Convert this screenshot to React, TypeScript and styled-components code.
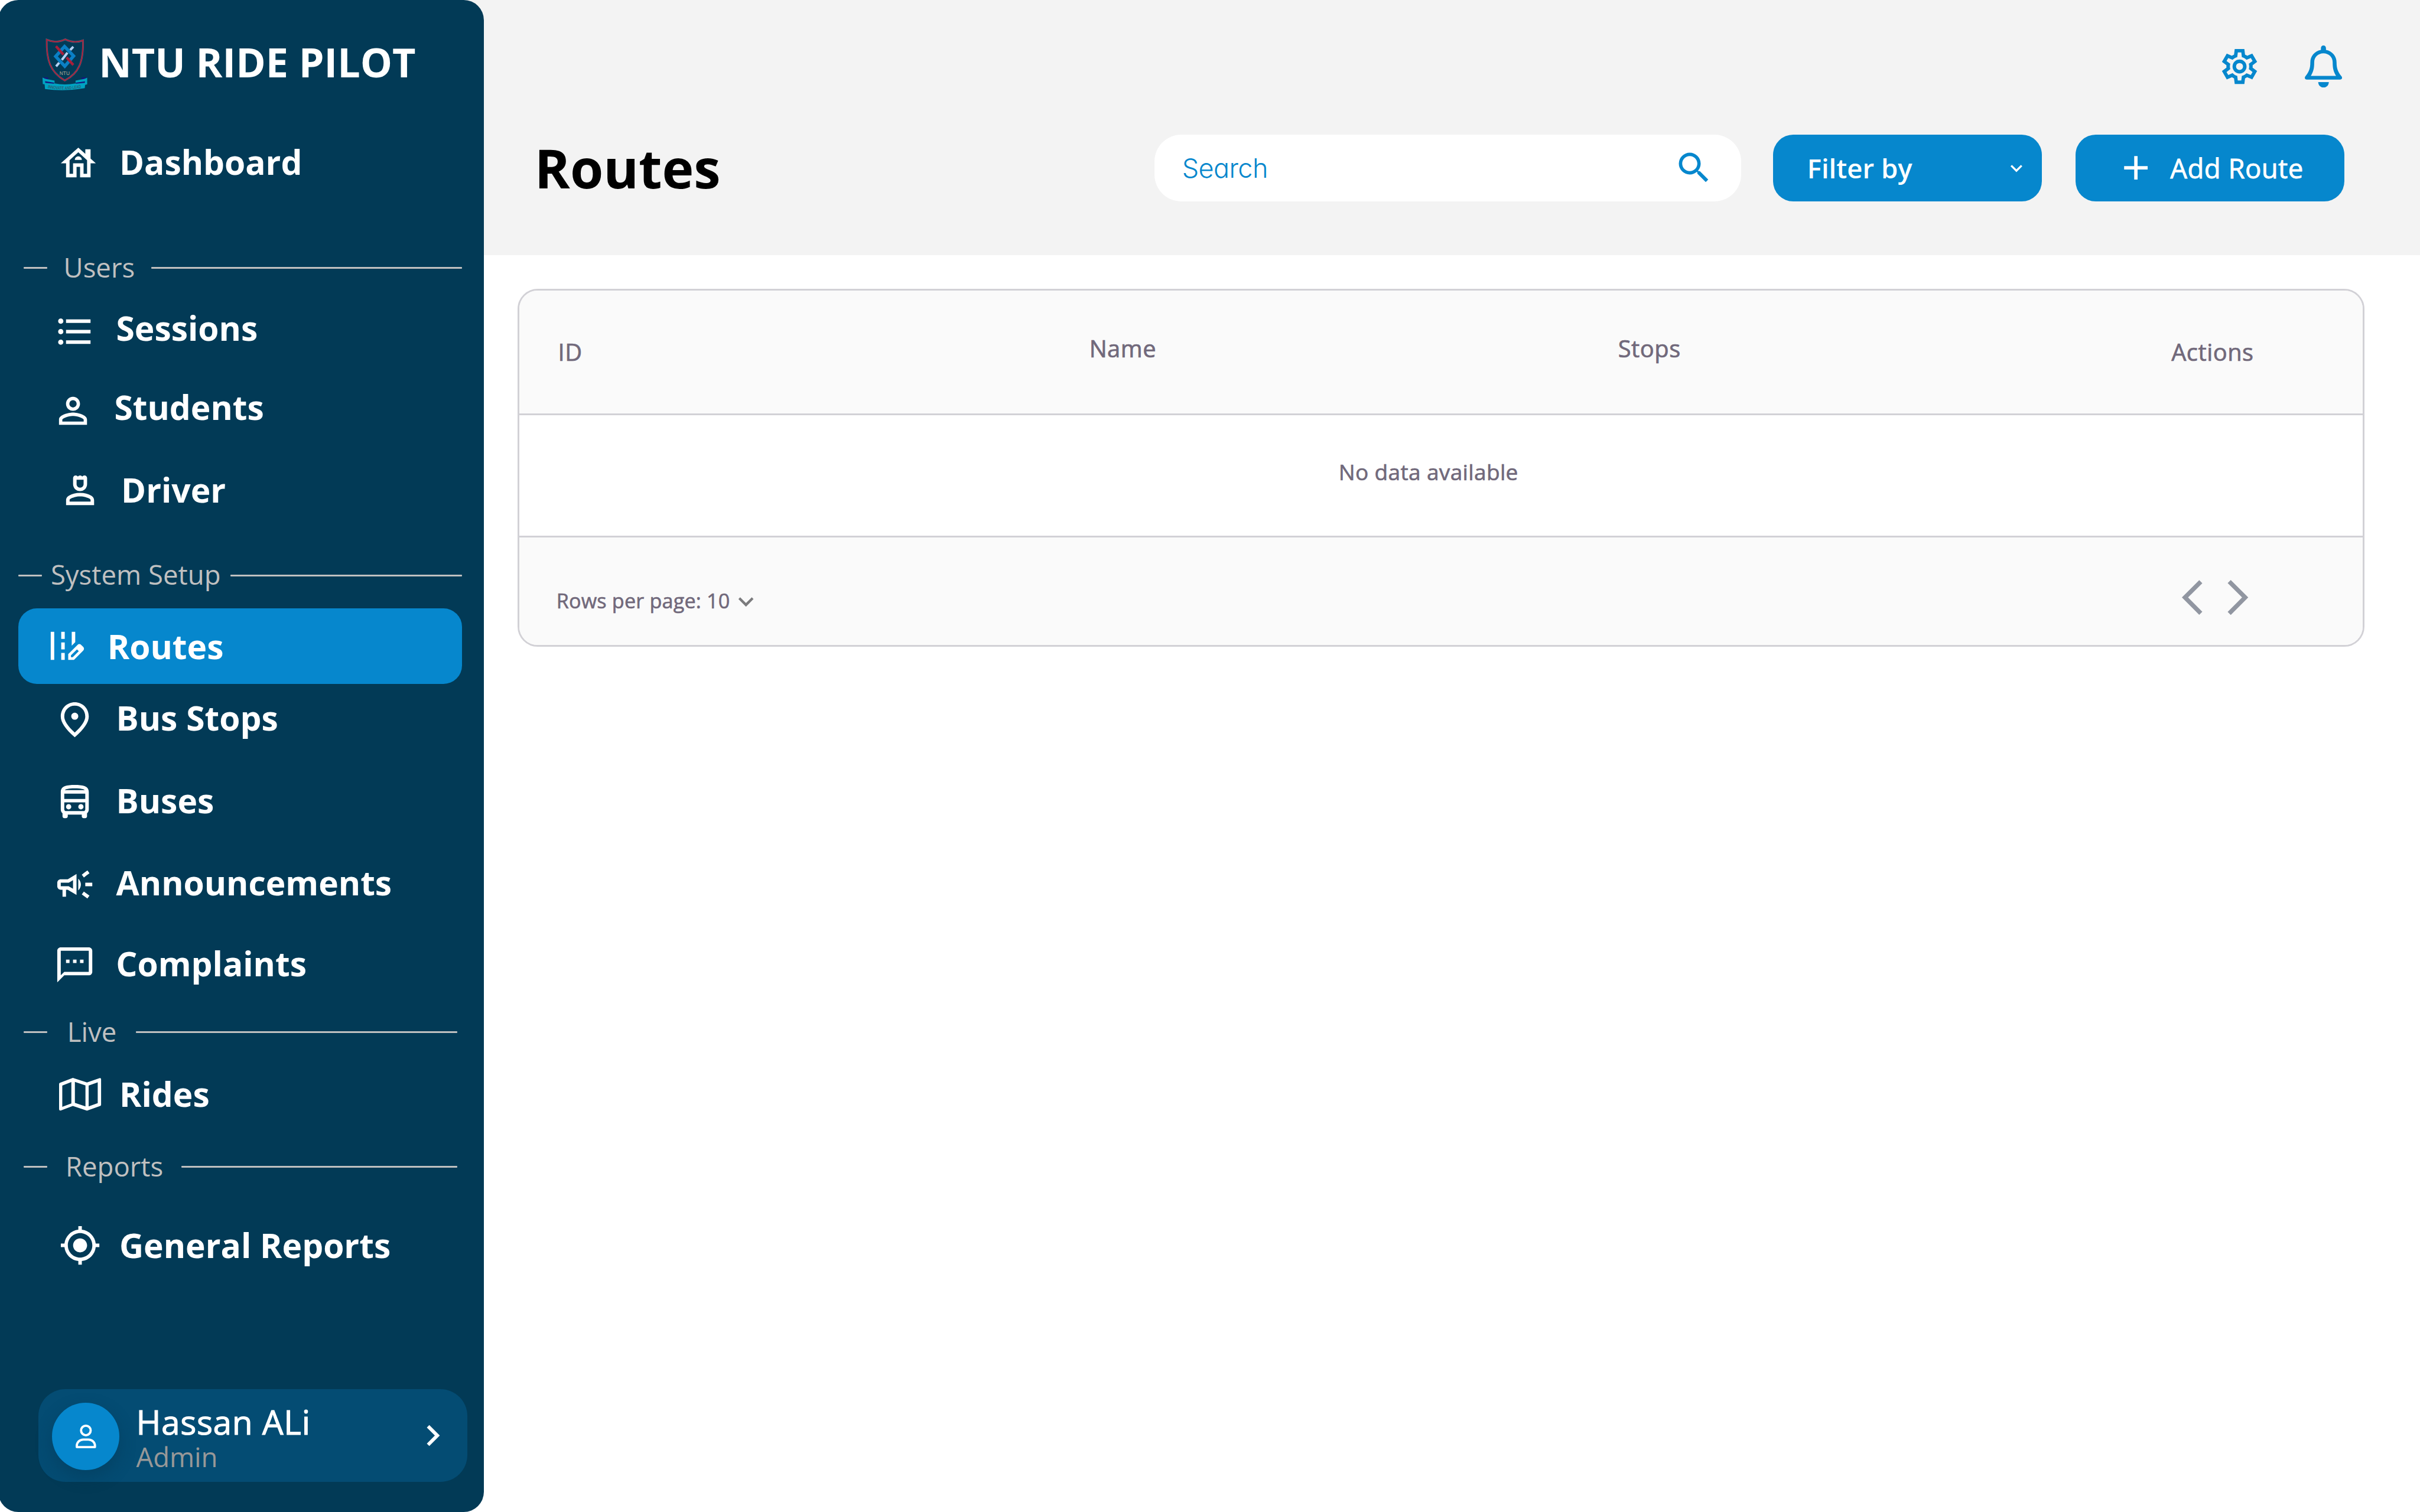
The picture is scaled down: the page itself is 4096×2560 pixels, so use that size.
import React from "react";
import styled, { createGlobalStyle, css } from "styled-components";
import {
  MdAdd,
  MdChevronRight,
  MdExpandMore,
  MdFormatListBulleted,
  MdMyLocation,
  MdOutlineCampaign,
  MdOutlineDirectionsBus,
  MdOutlineEditRoad,
  MdOutlineFmdGood,
  MdOutlineHouse,
  MdOutlinePerson4,
  MdOutlineTextsms,
  MdPersonOutline,
  MdSearch,
} from "react-icons/md";

/* The design grid is 1440 x 900; u() turns grid units into screen pixels. */
const u = (n: number) => `${((n * 4096) / 1440).toFixed(3)}px`;

const color = {
  navy: "#023a56",
  blue: "#0687cd",
  card: "#044c73",
  header: "#f3f3f3",
  rule: "#c0c0c0",
  border: "#d2d1d6",
  tableHead: "#fafafa",
  tableText: "#71697b",
  arrow: "#9196a1",
};

const Global = createGlobalStyle`
  *, *::before, *::after { box-sizing: border-box; }
  body {
    margin: 0;
    background: #fff;
    font-family: "Open Sans", "Noto Sans", sans-serif;
  }
  button, input { font: inherit; border: 0; margin: 0; padding: 0; background: none; color: inherit; }
  svg { display: block; flex: none; }
`;

/* Medium weight: the regular cut, slightly thickened and opened up. */
const medium = css<{ $track?: number }>`
  font-weight: 400;
  letter-spacing: ${(p) => p.$track ?? 0.013}em;
  -webkit-text-stroke: 0.018em currentColor;
`;

const Page = styled.div`
  display: flex;
  width: ${u(1440)};
  height: ${u(900)};
  overflow: hidden;
`;

/* ---------- Sidebar ---------- */

const Sidebar = styled.aside`
  z-index: 1;
  flex: none;
  display: flex;
  flex-direction: column;
  width: ${u(289)};
  height: 100%;
  margin-left: ${u(-1)};
  padding-left: ${u(1)};
  border-radius: ${u(12)};
  background: ${color.navy};
  color: #fff;
`;

const Brand = styled.div`
  display: flex;
  align-items: flex-start;
  height: ${u(76.1)};
  padding: ${u(22.5)} 0 0 ${u(25)};
`;

const BrandName = styled.div`
  margin-left: ${u(6.3)};
  font-size: ${u(24)};
  line-height: ${u(28.8)};
  font-weight: 700;
  white-space: nowrap;
`;

const NavItem = styled.a<{ $gap: number; $inset: number; $active?: boolean }>`
  display: flex;
  align-items: center;
  height: ${(p) => u(p.$active ? 45 : 40)};
  width: ${(p) => (p.$active ? u(264) : "auto")};
  margin-top: ${(p) => u(p.$gap)};
  margin-left: ${(p) => u(p.$active ? 11 : 0)};
  padding-left: ${(p) => u(p.$inset)};
  border-radius: ${u(11)};
  background: ${(p) => (p.$active ? color.blue : "transparent")};
`;

const NavIcon = styled.span<{ $drop: number }>`
  margin-top: ${(p) => u(p.$drop * 2)};
  font-size: ${u(25)};
`;

const NavLabel = styled.span<{ $gap: number }>`
  margin-left: ${(p) => u(p.$gap)};
  padding-top: ${u(0.8)};
  font-size: ${u(20)};
  line-height: ${u(28)};
  font-weight: 700;
  white-space: nowrap;
`;

const Section = styled.div<{ $gap: number; $left: number; $right: number; $label: number }>`
  display: grid;
  grid-template-columns: ${u(14)} ${(p) => u(p.$label)} 1fr;
  align-items: center;
  height: ${u(22)};
  margin-top: ${(p) => u(p.$gap)};
  padding-left: ${(p) => u(p.$left)};
  padding-right: ${(p) => u(p.$right)};
`;

const Rule = styled.span`
  height: 3px;
  border-radius: 1px;
  background: ${color.rule};
`;

const SectionLabel = styled.span<{ $inset: number }>`
  margin-bottom: ${u(0.9)};
  padding-left: ${(p) => u(p.$inset)};
  font-size: ${u(16)};
  line-height: ${u(20)};
  color: ${color.rule};
  white-space: nowrap;
`;

const Profile = styled.div`
  display: flex;
  align-items: center;
  width: ${u(255)};
  height: ${u(55)};
  margin: ${u(66)} 0 0 ${u(23)};
  padding: 0 ${u(8)};
  border-radius: ${u(16)};
  background: ${color.card};
`;

const Avatar = styled.div`
  display: flex;
  align-items: center;
  justify-content: center;
  width: ${u(40)};
  height: ${u(40)};
  margin-top: ${u(1)};
  border-radius: 50%;
  background: ${color.blue};
  box-shadow: 0 ${u(4)} ${u(10)} rgba(3, 48, 72, 0.32);
`;

const ProfileText = styled.div`
  flex: 1;
  margin-left: ${u(10)};
  padding-top: ${u(4.6)};
  white-space: nowrap;
`;

const ProfileName = styled.div`
  ${medium}
  font-size: ${u(20)};
  line-height: ${u(20.6)};
`;

const ProfileRole = styled.div`
  font-size: ${u(16)};
  line-height: ${u(20.6)};
  color: #989898;
`;

const ProfileChevron = styled.span`
  font-size: ${u(25)};
`;

/* ---------- Main ---------- */

const Main = styled.main`
  flex: 1;
  margin-left: ${u(-14)};
`;

const Header = styled.header`
  height: ${u(152)};
  padding: ${u(27)} ${u(45)} 0 ${u(44.1)};
  background: ${color.header};
`;

const HeaderIcons = styled.div`
  display: flex;
  justify-content: flex-end;
  gap: ${u(26.4)};
  height: ${u(25)};
  margin-right: ${u(1.4)};
  color: ${color.blue};
`;

const Toolbar = styled.div`
  display: flex;
  align-items: center;
  height: ${u(40)};
  margin-top: ${u(28)};
`;

const Title = styled.h1`
  flex: 1;
  margin: 0;
  padding-bottom: ${u(0.3)};
  font-size: ${u(32)};
  line-height: ${u(38)};
  font-weight: 700;
  color: #000;
`;

const SearchBox = styled.label`
  display: flex;
  align-items: center;
  width: ${u(349)};
  height: ${u(40)};
  padding: 0 ${u(16)} 0 ${u(16.4)};
  border-radius: ${u(16)};
  background: #fff;
  color: ${color.blue};
  font-size: ${u(24)};
`;

const SearchText = styled.span`
  flex: 1;
  padding-top: ${u(1)};
  font-family: Inter, Lato, sans-serif;
  font-size: ${u(15.8)};
  line-height: ${u(20)};
  font-weight: 300;
  letter-spacing: -0.013em;
  font-feature-settings: "cv11" 1;
`;

const ActionButton = styled.button<{ $gap: number; $left: number }>`
  display: flex;
  align-items: center;
  width: ${u(160)};
  height: ${u(40)};
  margin-left: ${(p) => u(p.$gap)};
  padding-left: ${(p) => u(p.$left)};
  border-radius: ${u(12)};
  background: ${color.blue};
  color: #fff;
`;

const FilterLabel = styled.span`
  width: ${u(117.6)};
  text-align: left;
  font-size: ${u(16)};
  line-height: ${u(22)};
  font-weight: 600;
`;

const AddLabel = styled.span`
  ${medium}
  margin-left: ${u(8.4)};
  font-size: ${u(16)};
  line-height: ${u(22)};
  white-space: nowrap;
`;

const ButtonIcon = styled.span<{ $size: number }>`
  font-size: ${(p) => u(p.$size)};
`;

/* ---------- Table ---------- */

const Table = styled.section`
  width: ${u(1099)};
  height: ${u(213)};
  margin: ${u(20)} 0 0 ${u(34)};
  border: 3px solid ${color.border};
  border-radius: ${u(12)};
  overflow: hidden;
  background: #fff;
  color: ${color.tableText};
  display: grid;
  grid-template-rows: ${u(74)} ${u(73)} 1fr;
`;

const HeadRow = styled.div`
  display: grid;
  grid-template-columns: ${u(339.1)} ${u(314.7)} ${u(329.2)} 1fr;
  align-items: center;
  border-bottom: 3px solid ${color.border};
  background: ${color.tableHead};
`;

const HeadCell = styled.div<{ $inset?: number; $lift?: number }>`
  ${medium}
  padding-top: ${u(0.6)};
  padding-left: ${(p) => u(p.$inset ?? 0)};
  padding-bottom: ${(p) => u((p.$lift ?? 0) * 2)};
  font-size: ${u(14)};
  line-height: ${u(20)};
`;

const EmptyRow = styled.div`
  ${medium}
  display: flex;
  align-items: center;
  justify-content: center;
  padding: 0 ${u(15)} ${u(4.3)} 0;
  border-bottom: 3px solid ${color.border};
  font-size: ${u(13)};
`;

const FootRow = styled.div`
  display: flex;
  align-items: center;
  justify-content: space-between;
  padding: 0 ${u(62)} 0 ${u(22)};
  background: ${color.tableHead};
`;

const RowsPerPage = styled.div`
  ${medium}
  display: flex;
  align-items: center;
  margin-top: ${u(11.2)};
  font-size: ${u(12)};
  line-height: ${u(18)};
`;

const RowsChevron = styled.span`
  margin: ${u(1.2)} 0 0 ${u(0.4)};
  font-size: ${u(18)};
  color: #7b7b7d;
`;

const Pager = styled.div`
  display: flex;
  margin-top: ${u(7.2)};
  color: ${color.arrow};
`;

const PagerIcon = styled.svg`
  width: ${u(25)};
  height: ${u(25)};
  fill: currentColor;
  & + & {
    margin-left: ${u(-4.4)};
  }
`;

/* ---------- Drawings ---------- */

const Sized = styled.svg<{ $w: number; $h: number }>`
  width: ${(p) => u(p.$w)};
  height: ${(p) => u(p.$h)};
  overflow: visible;
`;

const Crest = () => (
  <Sized $w={27.5} $h={31.7} viewBox="60 60 330 380">
    <g fill="none" strokeLinejoin="miter">
      <path d="M94 73Q160 103 226 71Q292 103 353 78C357 230 326 312 223 365C120 305 91 222 94 73Z" stroke="#8fa5b3" strokeOpacity=".55" strokeWidth="12" />
      <path d="M94 73Q160 103 226 71Q292 103 353 78C357 230 326 312 223 365C120 305 91 222 94 73Z" stroke="#a81f3b" strokeWidth="9" />
      <path d="M221 122L286 190L223 263L158 193Z" stroke="#0a80c6" strokeWidth="23" />
      <path d="M284 124L262 147M242 166L202 218M183 238L161 264" stroke="#b4d2f4" strokeWidth="17" />
      <path d="M160 120L214 180M236 200L284 254" stroke="#a81f3b" strokeWidth="18" />
    </g>
    <text x="186" y="325" fontFamily="Liberation Sans, Arial, sans-serif" fontSize="42" textLength="72" lengthAdjust="spacingAndGlyphs" fill="#b3ab94">
      NTU
    </text>
    <path d="M64 344L82 352L150 366V386Q222 400 300 386V366L366 352L383 345V392L368 396L366 420Q222 446 82 426L79 392L66 390Z" fill="#00a3c2" />
    <path d="M65 342H104V357L82 350ZM82 370L148 380L146 388L84 382ZM383 343H344V357L366 351ZM368 371L300 380L302 388L366 382Z" fill="#17157d" />
    <path id="motto" d="M101 418Q222 442 344 416" fill="none" />
    <text fontFamily="Liberation Sans, Arial, sans-serif" fontSize="32" fontWeight="700" fill="#2a6075">
      <textPath href="#motto" textLength="242" lengthAdjust="spacingAndGlyphs">
        INNOVATE AND LEAD
      </textPath>
    </text>
  </Sized>
);

const MapIcon = () => (
  <Sized $w={25} $h={19.5} viewBox="0 0 25 19.5" fill="currentColor">
    <path
      fillRule="evenodd"
      d="M.8 2.8L8.2 0L16.6 2.7L24 .15Q25-.1 25 .9V16Q25 16.5 24.5 16.7L16.6 19.5L8.2 16.7L1 19.4Q0 19.6 0 18.6V3.6Q0 3 .8 2.8ZM1.9 4.6V17.2L7.3 15.2V2.5ZM9.4 2.4V14.9L15.7 17V4.5ZM17.6 4.6V17L23 15V2.6Z"
    />
  </Sized>
);

const GearIcon = () => (
  <Sized $w={25} $h={25} viewBox="0 0 24 24" fill="currentColor">
    <path
      fillRule="evenodd"
      d="M9.25 22L8.85 18.8Q8.52 18.68 8.24 18.5Q7.95 18.33 7.68 18.13L4.7 19.38L1.95 14.63L4.53 12.68Q4.5 12.5 4.5 12.34V11.66Q4.5 11.5 4.53 11.33L1.95 9.38L4.7 4.63L7.68 5.88Q7.95 5.68 8.25 5.5Q8.55 5.33 8.85 5.2L9.25 2H14.75L15.15 5.2Q15.48 5.33 15.76 5.5Q16.05 5.68 16.33 5.88L19.3 4.63L22.05 9.38L19.48 11.33Q19.5 11.5 19.5 11.66V12.34Q19.5 12.5 19.45 12.68L22.03 14.63L19.28 19.38L16.33 18.13Q16.05 18.33 15.75 18.5Q15.45 18.68 15.15 18.8L14.75 22ZM11 20H12.98L13.33 17.35Q14.1 17.15 14.76 16.76Q15.43 16.38 15.98 15.83L18.45 16.85L19.43 15.15L17.28 13.53Q17.4 13.18 17.45 12.79Q17.5 12.4 17.5 12Q17.5 11.6 17.45 11.21Q17.4 10.83 17.28 10.48L19.43 8.85L18.45 7.15L15.98 8.2Q15.43 7.63 14.76 7.24Q14.1 6.85 13.33 6.65L13 4H11.03L10.68 6.65Q9.9 6.85 9.24 7.24Q8.58 7.63 8.03 8.18L5.55 7.15L4.58 8.85L6.73 10.45Q6.6 10.83 6.55 11.2Q6.5 11.58 6.5 12Q6.5 12.4 6.55 12.78Q6.6 13.15 6.73 13.53L4.58 15.15L5.55 16.85L8.03 15.8Q8.58 16.38 9.24 16.76Q9.9 17.15 10.68 17.35ZM12 8A4 4 0 1 0 12 16A4 4 0 1 0 12 8ZM12 10A2 2 0 1 1 12 14A2 2 0 1 1 12 10Z"
    />
  </Sized>
);

const BellIcon = () => (
  <Sized $w={22.2} $h={25} viewBox="0 0 22.2 25" fill="currentColor">
    <path
      fillRule="evenodd"
      d="M11.1 0C12 0 12.6.7 12.6 1.6V2.6C16.5 3.3 18.9 6.5 18.9 10C18.9 13.5 19.6 15.5 21.8 18.3C22.6 19.3 22 20.3 21 20.3H1.2C.2 20.3-.4 19.3.4 18.3C2.6 15.5 3.3 13.5 3.3 10C3.3 6.5 5.7 3.3 9.6 2.6V1.6C9.6.7 10.2 0 11.1 0ZM11.1 4.7C8 4.7 5.6 7 5.6 10C5.6 13.5 5.2 15.4 3.6 18.1H18.6C17 15.4 16.6 13.5 16.6 10C16.6 7 14.2 4.7 11.1 4.7Z"
    />
    <path d="M8 21.8H14.3C14.3 23.6 13 25 11.15 25S8 23.6 8 21.8Z" />
  </Sized>
);

const UserIcon = () => (
  <Sized $w={12.2} $h={14.1} viewBox="0 0 12.2 14.1" fill="none" stroke="currentColor" strokeWidth="1.35" strokeLinejoin="round">
    <circle cx="6.1" cy="3.5" r="2.85" />
    <path d="M4.6 8.9H7.6C9.8 8.9 11.5 10.5 11.5 12.7V13.4H.7V12.7C.7 10.5 2.4 8.9 4.6 8.9Z" />
  </Sized>
);

/* ---------- Content ---------- */

type Item = {
  label: string;
  icon: React.ReactNode;
  gap: number;
  inset: number;
  drop: number;
  labelGap: number;
  active?: boolean;
};
type Group = {
  title?: { text: string; gap: number; left: number; right: number; label: number; inset: number };
  items: Item[];
};

const groups: Group[] = [
  {
    items: [{ label: "Dashboard", icon: <MdOutlineHouse />, gap: 0, inset: 34.2, drop: 1.1, labelGap: 11.8 }],
  },
  {
    title: { text: "Users", gap: 32.4, left: 14, right: 13, label: 61.9, inset: 9.8 },
    items: [
      { label: "Sessions", icon: <MdFormatListBulleted />, gap: 4.7, inset: 32, drop: 2.3, labelGap: 12.1 },
      { label: "Students", icon: <MdPersonOutline />, gap: 7, inset: 31, drop: 2.3, labelGap: 12 },
      { label: "Driver", icon: <MdOutlinePerson4 />, gap: 9, inset: 35, drop: 1.2, labelGap: 12.1 },
    ],
  },
  {
    title: { text: "System Setup", gap: 20.3, left: 11, right: 13, label: 112, inset: 5.2 },
    items: [
      { label: "Routes", icon: <MdOutlineEditRoad />, gap: 8.5, inset: 15, drop: 0.1, labelGap: 12.9, active: true },
      { label: "Bus Stops", icon: <MdOutlineFmdGood />, gap: 0.2, inset: 32, drop: 1.3, labelGap: 12.1 },
      { label: "Buses", icon: <MdOutlineDirectionsBus />, gap: 9, inset: 32, drop: 1.3, labelGap: 12.1 },
      { label: "Announcements", icon: <MdOutlineCampaign />, gap: 9, inset: 32, drop: 1.4, labelGap: 12.1 },
      { label: "Complaints", icon: <MdOutlineTextsms />, gap: 8, inset: 32, drop: 1.2, labelGap: 12 },
    ],
  },
  {
    title: { text: "Live", gap: 10.3, left: 14, right: 16, label: 53, inset: 12 },
    items: [{ label: "Rides", icon: <MapIcon />, gap: 5.7, inset: 35, drop: 0.4, labelGap: 11 }],
  },
  {
    title: { text: "Reports", gap: 12.3, left: 14, right: 16, label: 80, inset: 11 },
    items: [{ label: "General Reports", icon: <MdMyLocation />, gap: 15.5, inset: 35, drop: 0.3, labelGap: 11 }],
  },
];

export default function App() {
  return (
    <Page>
      <Global />
      <Sidebar>
        <Brand>
          <Crest />
          <BrandName>NTU RIDE PILOT</BrandName>
        </Brand>
        {groups.map((g, i) => (
          <React.Fragment key={i}>
            {g.title && (
              <Section $gap={g.title.gap} $left={g.title.left} $right={g.title.right} $label={g.title.label}>
                <Rule />
                <SectionLabel $inset={g.title.inset}>{g.title.text}</SectionLabel>
                <Rule />
              </Section>
            )}
            {g.items.map((it) => (
              <NavItem key={it.label} $gap={it.gap} $inset={it.inset} $active={it.active}>
                <NavIcon $drop={it.drop}>{it.icon}</NavIcon>
                <NavLabel $gap={it.labelGap}>{it.label}</NavLabel>
              </NavItem>
            ))}
          </React.Fragment>
        ))}
        <Profile>
          <Avatar>
            <UserIcon />
          </Avatar>
          <ProfileText>
            <ProfileName $track={0.011}>Hassan ALi</ProfileName>
            <ProfileRole>Admin</ProfileRole>
          </ProfileText>
          <ProfileChevron>
            <MdChevronRight />
          </ProfileChevron>
        </Profile>
      </Sidebar>
      <Main>
        <Header>
          <HeaderIcons>
            <GearIcon />
            <BellIcon />
          </HeaderIcons>
          <Toolbar>
            <Title>Routes</Title>
            <SearchBox>
              <SearchText>Search</SearchText>
              <MdSearch />
            </SearchBox>
            <ActionButton $gap={19} $left={20.3}>
              <FilterLabel>Filter by</FilterLabel>
              <ButtonIcon $size={14}>
                <MdExpandMore />
              </ButtonIcon>
            </ActionButton>
            <ActionButton $gap={20} $left={24}>
              <ButtonIcon $size={24}>
                <MdAdd />
              </ButtonIcon>
              <AddLabel $track={0.01}>Add Route</AddLabel>
            </ActionButton>
          </Toolbar>
        </Header>
        <Table>
          <HeadRow>
            <HeadCell $inset={23}>ID</HeadCell>
            <HeadCell $lift={2.1}>Name</HeadCell>
            <HeadCell $lift={2.1}>Stops</HeadCell>
            <HeadCell>Actions</HeadCell>
          </HeadRow>
          <EmptyRow $track={0.01}>No data available</EmptyRow>
          <FootRow>
            <RowsPerPage $track={0.006}>
              Rows per page: 10
              <RowsChevron>
                <MdExpandMore />
              </RowsChevron>
            </RowsPerPage>
            <Pager>
              <PagerIcon viewBox="0 0 24 24">
                <path d="M11.67 3.87L9.9 2.1 0 12l9.9 9.9 1.77-1.77L3.54 12z" />
              </PagerIcon>
              <PagerIcon viewBox="0 0 24 24">
                <path d="M6.23 20.23L8 22l10-10L8 2 6.23 3.77 14.46 12z" />
              </PagerIcon>
            </Pager>
          </FootRow>
        </Table>
      </Main>
    </Page>
  );
}
